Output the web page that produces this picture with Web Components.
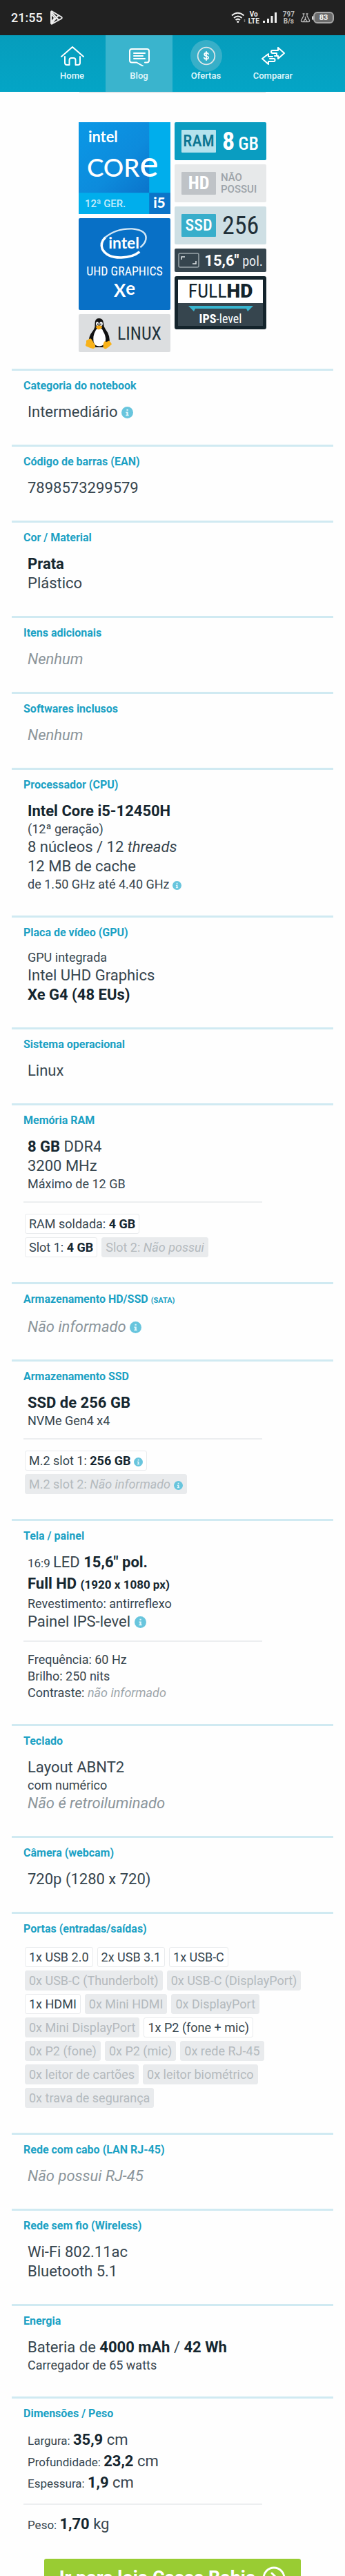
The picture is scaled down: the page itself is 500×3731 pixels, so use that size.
<!DOCTYPE html>
<html lang="pt-BR">
<head>
<meta charset="utf-8">
<meta name="viewport" content="width=device-width, initial-scale=1">
<title>Ficha do notebook</title>
<style>
body{
    margin:0;
    background:#fefefe;
    color:#36454e;
    font-family:Roboto, "Liberation Sans", sans-serif;
}
b{
    font-weight:700;
    color:#15262f;
}
</style>
</head>
<body>
<app-shell>
    <status-bar slot="top"></status-bar>
    <site-nav slot="top">
        <nav-item>
            <svg slot="icon" width="34" height="30" viewBox="0 0 34 30" fill="none" stroke="#fff" stroke-width="2" stroke-linecap="round" stroke-linejoin="round"><path d="M1 16 17 2l16 14M6 16v9q0 3 3 3h3.500V21q0-3 3-3h3q3 0 3 3v7H25q3 0 3-3v-9"/></svg>
            Home
        </nav-item>
        <nav-item active>
            <svg slot="icon" width="34" height="30" viewBox="0 0 34 30" fill="none" stroke="#fff" stroke-width="2" stroke-linecap="round" stroke-linejoin="round"><path d="M13 24.500H6q-3 0-3-3V8q0-3 3-3h22q3 0 3 3v13.500q0 3-3 3h-3M13 24.500l9 5"/><path d="M9 11h16M9 15h13M9 19h16"/></svg>
            Blog
        </nav-item>
        <nav-item halo>
            <svg slot="icon" width="34" height="30" viewBox="0 0 34 30" fill="none" stroke="#fff" stroke-linecap="round"><circle cx="17" cy="15" r="14" stroke="#dfe6e8" stroke-width="2"/><path d="M20.500 12q-1-2-3.500-2-3.200 0-3.200 2.500 0 2 3.200 2.500t3.400 2.500q0 2.700-3.400 2.700-2.900 0-3.700-2.200M17 8v14" stroke-width="2"/></svg>
            Ofertas
        </nav-item>
        <nav-item>
            <svg slot="icon" width="36" height="30" viewBox="0 0 36 30" fill="none" stroke="#fff" stroke-width="2" stroke-linecap="round" stroke-linejoin="round"><path d="M25 3l9 8-9 8v-4h-5M25 3v4h-8q-2 0-2 2t2 2h6v3M11 27l-9-8 9-7v4h6M11 27v-4h8q1.500 0 1.500-2t-1.500-2h-6"/></svg>
            Comparar
        </nav-item>
    </site-nav>

    <product-badges></product-badges>

    <spec-section><span slot="title">Categoria do notebook</span>
        <spec-line>Intermediário <info-dot></info-dot></spec-line>
    </spec-section>
    <spec-section><span slot="title">Código de barras (EAN)</span>
        <spec-line>7898573299579</spec-line>
    </spec-section>
    <spec-section><span slot="title">Cor / Material</span>
        <spec-line><b>Prata</b></spec-line>
        <spec-line>Plástico</spec-line>
    </spec-section>
    <spec-section><span slot="title">Itens adicionais</span>
        <spec-line muted>Nenhum</spec-line>
    </spec-section>
    <spec-section><span slot="title">Softwares inclusos</span>
        <spec-line muted>Nenhum</spec-line>
    </spec-section>
    <spec-section><span slot="title">Processador (CPU)</span>
        <spec-line><b>Intel Core i5-12450H</b></spec-line>
        <spec-line small>(12ª geração)</spec-line>
        <spec-line>8 núcleos / 12 <i>threads</i></spec-line>
        <spec-line>12 MB de cache</spec-line>
        <spec-line small>de 1.50 GHz até 4.40 GHz <info-dot small></info-dot></spec-line>
    </spec-section>
    <spec-section><span slot="title">Placa de vídeo (GPU)</span>
        <spec-line small>GPU integrada</spec-line>
        <spec-line>Intel UHD Graphics</spec-line>
        <spec-line><b>Xe G4 (48 EUs)</b></spec-line>
    </spec-section>
    <spec-section><span slot="title">Sistema operacional</span>
        <spec-line>Linux</spec-line>
    </spec-section>
    <spec-section><span slot="title">Memória RAM</span>
        <spec-line><b>8 GB</b> DDR4</spec-line>
        <spec-line>3200 MHz</spec-line>
        <spec-line small>Máximo de 12 GB</spec-line>
        <spec-rule></spec-rule>
        <chip-list>
            <spec-chip full>RAM soldada: <b>4 GB</b></spec-chip>
            <spec-chip>Slot 1: <b>4 GB</b></spec-chip>
            <spec-chip off>Slot 2: <i>Não possui</i></spec-chip>
        </chip-list>
    </spec-section>
    <spec-section><span slot="title">Armazenamento HD/SSD</span><span slot="note">(SATA)</span>
        <spec-line muted>Não informado <info-dot></info-dot></spec-line>
    </spec-section>
    <spec-section><span slot="title">Armazenamento SSD</span>
        <spec-line><b>SSD de 256 GB</b></spec-line>
        <spec-line small>NVMe Gen4 x4</spec-line>
        <spec-rule></spec-rule>
        <chip-list>
            <spec-chip full>M.2 slot 1: <b>256 GB</b> <info-dot small></info-dot></spec-chip>
            <spec-chip off>M.2 slot 2: <i>Não informado</i> <info-dot small></info-dot></spec-chip>
        </chip-list>
    </spec-section>
    <spec-section><span slot="title">Tela / painel</span>
        <spec-line mixed><spec-text>16:9</spec-text> LED <b>15,6" pol.</b></spec-line>
        <spec-line mixed><b>Full HD <spec-text>(1920 x 1080 px)</spec-text></b></spec-line>
        <spec-line small>Revestimento: antirreflexo</spec-line>
        <spec-line>Painel IPS-level <info-dot></info-dot></spec-line>
        <spec-rule></spec-rule>
        <spec-line small>Frequência: 60 Hz</spec-line>
        <spec-line small>Brilho: 250 nits</spec-line>
        <spec-line small>Contraste: <spec-text muted>não informado</spec-text></spec-line>
    </spec-section>
    <spec-section><span slot="title">Teclado</span>
        <spec-line>Layout ABNT2</spec-line>
        <spec-line small>com numérico</spec-line>
        <spec-line muted>Não é retroiluminado</spec-line>
    </spec-section>
    <spec-section><span slot="title">Câmera (webcam)</span>
        <spec-line>720p (1280 x 720)</spec-line>
    </spec-section>
    <spec-section><span slot="title">Portas (entradas/saídas)</span>
        <chip-list>
            <spec-chip>1x USB 2.0</spec-chip>
            <spec-chip>2x USB 3.1</spec-chip>
            <spec-chip>1x USB-C</spec-chip>
            <spec-chip off>0x USB-C (Thunderbolt)</spec-chip>
            <spec-chip off>0x USB-C (DisplayPort)</spec-chip>
            <spec-chip>1x HDMI</spec-chip>
            <spec-chip off>0x Mini HDMI</spec-chip>
            <spec-chip off>0x DisplayPort</spec-chip>
            <spec-chip off>0x Mini DisplayPort</spec-chip>
            <spec-chip>1x P2 (fone + mic)</spec-chip>
            <spec-chip off>0x P2 (fone)</spec-chip>
            <spec-chip off>0x P2 (mic)</spec-chip>
            <spec-chip off>0x rede RJ-45</spec-chip>
            <spec-chip off>0x leitor de cartões</spec-chip>
            <spec-chip off>0x leitor biométrico</spec-chip>
            <spec-chip off>0x trava de segurança</spec-chip>
        </chip-list>
    </spec-section>
    <spec-section><span slot="title">Rede com cabo (LAN RJ-45)</span>
        <spec-line muted>Não possui RJ-45</spec-line>
    </spec-section>
    <spec-section><span slot="title">Rede sem fio (Wireless)</span>
        <spec-line>Wi-Fi 802.11ac</spec-line>
        <spec-line>Bluetooth 5.1</spec-line>
    </spec-section>
    <spec-section><span slot="title">Energia</span>
        <spec-line>Bateria de <b>4000 mAh</b> / <b>42 Wh</b></spec-line>
        <spec-line small>Carregador de 65 watts</spec-line>
    </spec-section>
    <spec-section><span slot="title">Dimensões / Peso</span>
        <spec-line mixed><spec-text>Largura:</spec-text> <b>35,9</b> cm</spec-line>
        <spec-line mixed><spec-text>Profundidade:</spec-text> <b>23,2</b> cm</spec-line>
        <spec-line mixed><spec-text>Espessura:</spec-text> <b>1,9</b> cm</spec-line>
        <spec-rule></spec-rule>
        <spec-line mixed><spec-text>Peso:</spec-text> <b>1,70</b> kg</spec-line>
    </spec-section>

    <store-link>Ir para loja Casas Bahia</store-link>
</app-shell>

<script>
// every element here is a shadow root cloned from its own template
function define(name, html, setup) {
    const template = document.createElement('template');
    template.innerHTML = html;
    customElements.define(name, class extends HTMLElement {
        constructor() {
            super();
            this.attachShadow({ mode: 'open' });
            this.shadowRoot.appendChild(template.content.cloneNode(true));
        }
        connectedCallback() {
            if (setup) setup(this, this.shadowRoot);
        }
    });
}

// bars stay on top, the sheet scrolls below them
define('app-shell', `
<style>
:host{
    display:flex;
    flex-direction:column;
    height:100vh;
}
main{
    flex:1;
    min-height:0;
    overflow-y:auto;
    scrollbar-width:none;
}
</style>
<header><slot name="top"></slot></header>
<main><slot></slot></main>
`);

define('status-bar', `
<style>
:host{
    display:flex;
    align-items:center;
    justify-content:space-between;
    height:51px;
    padding:0 16px;
    background:#212121;
    color:#f2f2f2;
}
.side{
    display:flex;
    align-items:center;
}
.left{ gap:10px; }
.right{ gap:4px; }
time{
    font-size:18px;
    font-weight:500;
}
.two{
    font-size:10px;
    line-height:10px;
    font-weight:700;
    text-align:center;
}
.dim{ color:#bdbdbd; margin:0 4px; }
.battery{
    display:flex;
    align-items:center;
}
.nub{
    width:2px;
    height:6px;
    margin-left:2px;
    border-radius:2px 0 0 2px;
    background:#ddd;
}
.cell{
    box-sizing:border-box;
    width:30px;
    height:17px;
    border:2px solid #a8a8a8;
    border-radius:6px;
    background:#6b6b6b;
    font-size:11px;
    line-height:13px;
    font-weight:700;
    text-align:center;
}
</style>
<div class="side left">
    <time>21:55</time>
    <svg width="19" height="21" viewBox="0 0 19 21" fill="none" stroke="#eee" stroke-width="2" stroke-linejoin="round"><path d="M2 2.500v16q0 1.500 1.500 1L17 12q1.500-1.300 0-2.500L3.500 1.500Q2 1 2 2.500zM3 3l10 11M3 18.500 13 7M3 6l4 5-4 5"/></svg>
</div>
<div class="side right">
    <svg width="21" height="17" viewBox="0 0 21 17" fill="none" stroke="#eee" stroke-width="2"><path d="M1 5.500q8.500-7.500 17.500 0M4 9q6-5 11.500 0M6.500 12q3.300-2.800 6.500 0"/><circle cx="9.800" cy="14.500" r="1.500" fill="#eee" stroke="none"/><path d="M19.500 11v4" stroke="#777" stroke-width="1.500"/></svg>
    <div class="two">Vo<br>LTE</div>
    <svg width="22" height="17" viewBox="0 0 22 17" fill="#eee"><path d="M1 13h3v3H1zM7 10h3v6H7zM12.500 6h3v10h-3zM18 1h3v15h-3z"/></svg>
    <div class="two dim">797<br>B/s</div>
    <div class="battery">
        <svg width="15" height="14" viewBox="0 0 15 14" fill="none" stroke="#bbb" stroke-width="1.300"><path d="M5 1v3L1.500 10.500q-.5 2 1.500 2h9q2 0 1.500-2L10 4V1M3.500 1h3M8.500 1h3M7.500 5v3l-2.500 4M7.500 8l2.500 4"/></svg>
        <div class="nub"></div>
        <div class="cell">83</div>
    </div>
</div>
`);

define('site-nav', `
<style>
:host{ display:block; }
nav{
    display:flex;
    justify-content:center;
    height:82px;
    background:linear-gradient(#069dbc, #04a5c6);
}
.edge{
    width:54%;
    height:2px;
    margin:0 auto -2px;
    background:linear-gradient(#d3dade, #f6f7f8);
}
</style>
<nav><slot></slot></nav>
<div class="edge"></div>
`);

define('nav-item', `
<style>
:host{
    display:block;
    width:97px;
}
a{
    display:flex;
    flex-direction:column;
    align-items:center;
    gap:6px;
    height:100%;
    box-sizing:border-box;
    padding-top:15px;
    color:#e4f8fc;
    font-size:13px;
    line-height:16px;
    font-weight:500;
    text-decoration:none;
}
.icon{
    display:flex;
    border-radius:50%;
}
:host([active]) a{ background:#3ab4cd; }
:host([halo]) .icon{
    background:#38afc8;
    box-shadow:0 0 0 8px #38afc8;
    width:30px;
    justify-content:center;
}
.label{ position:relative; }
</style>
<a href="#"><span class="icon"><slot name="icon"></slot></span><span class="label"><slot></slot></span></a>
`);

define('product-badges', `
<style>
:host{
    display:flex;
    justify-content:center;
    align-items:flex-start;
    gap:6px;
    padding:44px 16px 24px;
    font-family:"Roboto Condensed", Roboto, sans-serif;
}
.col{
    display:flex;
    flex-direction:column;
    gap:6px;
    width:133px;
}
.col > svg{ display:block; }
.badge{
    display:flex;
    align-items:center;
    box-sizing:border-box;
    height:55px;
    gap:9px;
    padding:0 10px;
    border-radius:2px;
    white-space:nowrap;
}
.tag{
    width:50px;
    height:33px;
    border-radius:1px;
    font-size:24px;
    line-height:33px;
    text-align:center;
}
.linux{ background:#dcdee0; color:#22323b; font-size:26px; gap:8px; }
.ram{ background:#0a9dc1; color:#fff; font-size:26px; font-weight:500; }
.ram .tag{ background:#b4e2ed; color:#0c7591; }
.ram strong{ font-size:36px; }
.ram .value{ display:flex; align-items:baseline; gap:5px; }
.hd{ background:#e7e9ea; color:#9da3a8; font:500 15px/17px Roboto, sans-serif; gap:7px; }
.hd .tag{ background:#bfc3c7; color:#fff; font:700 26px/33px "Roboto Condensed", Roboto, sans-serif; }
.ssd{ background:#cedfe4; color:#1f2f38; font-size:36px; }
.ssd .tag{ background:#38aecb; color:#fff; font-weight:500; }
.size{ background:#36454e; color:#e8ecee; height:34px; padding:0 5px; gap:5px; font-size:20px; justify-content:space-between; }
.size strong{ font-family:Roboto, sans-serif; font-size:22px; color:#fff; }
.full{
    box-sizing:border-box;
    border:5px solid #14242c;
    border-radius:3px;
    background:#36454e;
    color:#fff;
    text-align:center;
}
.full .top{
    background:#fff;
    color:#14242c;
    height:34px;
    font-size:28px;
    line-height:34px;
}
.full .top strong{ font-family:Roboto, sans-serif; font-weight:900; }
.full svg{ display:block; margin:4px auto 0; }
.full .bottom{
    font-size:18px;
    line-height:21px;
}
</style>
<div class="col">
    <svg viewBox="0 0 134 134" width="100%">
        <defs><linearGradient id="core" x1="0" y1="0" x2="1" y2="1"><stop offset="0" stop-color="#0a98e6"/><stop offset=".6" stop-color="#0d8bdc"/><stop offset="1" stop-color="#0b74cb"/></linearGradient></defs>
        <rect width="134" height="134" fill="#00aeec"/>
        <rect width="103" height="103" fill="url(#core)"/>
        <rect x="103" y="103" width="31" height="31" fill="#0b74c8"/>
        <g fill="#fff" font-family="Lato, sans-serif">
            <text x="14" y="29" font-size="22" font-weight="700">intel</text>
            <text x="12" y="80" font-size="37" font-weight="500">COR<tspan font-size="52">e</tspan></text>
            <text x="9" y="124" font-size="15" font-weight="500" font-family="Roboto, sans-serif" fill="#c5ecfb">12ª GER.</text>
            <text x="109" y="125" font-size="21" font-weight="900">i5</text>
        </g>
    </svg>
    <svg viewBox="0 0 134 134" width="100%">
        <rect width="134" height="134" rx="2" fill="#0870c6"/>
        <path d="M39 28Q54 15 78 15.500q23 2 20 16-1.500 6-8 11" fill="none" stroke="#d5e8f6" stroke-width="2.500"/>
        <path d="M39 28Q31 36 34.500 45q7 13 28 12.500Q79 57 89 49" fill="none" stroke="#fff" stroke-width="3.500"/>
        <g fill="#fff" text-anchor="middle">
            <text x="66" y="44" font-size="23" font-weight="700" font-family="Lato, sans-serif">intel</text>
            <text x="67" y="84" font-size="18" font-family="Roboto Condensed, Roboto, sans-serif">UHD GRAPHICS</text>
            <text x="67" y="115" font-size="26" font-weight="700" font-family="Lato, sans-serif">X<tspan dy="-3">e</tspan></text>
        </g>
    </svg>
    <div class="badge linux">
        <svg width="38" height="46" viewBox="0 0 38 46">
            <path d="M19.500 1q6 0 6.500 7 0 5 3 9 7 9 5.500 20L29 43H10L4.500 35q0-8 5.500-15 4-5 3.500-10Q13 1 19.500 1z" fill="#111"/>
            <path d="M20 15q4 0 5.500 5 4 6 3.500 13-1 8-9 8.500-7 0-8.500-7Q10.500 26 14 20q2-5 6-5z" fill="#fff"/>
            <ellipse cx="17" cy="9" rx="2" ry="3" fill="#fff"/><ellipse cx="22.500" cy="9" rx="2.300" ry="3" fill="#fff"/>
            <circle cx="17.500" cy="9.500" r="1" fill="#111"/><circle cx="22" cy="9.500" r="1" fill="#111"/>
            <path d="M14.500 13.500q5-4.500 10 0-4 5-7 3.500z" fill="#f5a914"/>
            <path d="M1 34q0-2 3-2 3-3.500 5 0l5 8q1 4-3 5-5-1-10-3.500Q-1 40 1 37zM28 34q2 2 6-.500 2.500 2 4 5-4 4-8 6.500-5 1-4.500-4 0-5 2.500-7z" fill="#f8b219"/>
        </svg>
        LINUX
    </div>
</div>
<div class="col">
    <div class="badge ram"><span class="tag">RAM</span><span class="value"><strong>8</strong><span>GB</span></span></div>
    <div class="badge hd"><span class="tag">HD</span><span>NÃO<br>POSSUI</span></div>
    <div class="badge ssd"><span class="tag">SSD</span>256</div>
    <div class="badge size">
        <svg width="31" height="22" viewBox="0 0 31 22" fill="none" stroke="#9aa5ab" stroke-width="1.500"><rect x="1" y="1" width="29" height="20" rx="2"/><path d="M5 10V6h5M26 12v4h-5" stroke="#dfe4e6"/></svg>
        <span><strong>15,6″</strong> pol.</span>
    </div>
    <div class="full">
        <div class="top">FULL<strong>HD</strong></div>
        <svg width="94" height="8" viewBox="0 0 94 8"><path d="M0 0h94l-8 8-2-4H10L8 8z" fill="#38b5cf"/></svg>
        <div class="bottom"><strong>IPS</strong>-level</div>
    </div>
</div>
`);

define('spec-section', `
<style>
:host{
    display:block;
    margin:0 17px;
    padding-bottom:33px;
    border-top:3px solid #d0eaf2;
}
h2{
    display:flex;
    align-items:baseline;
    gap:4px;
    margin:0;
    padding:12px 17px 14px;
    color:#1ba1c4;
    font-size:16px;
    line-height:20px;
    font-weight:700;
}
.note{ font-size:11px; }
</style>
<h2><slot name="title"></slot><span class="note"><slot name="note"></slot></span></h2>
<slot></slot>
`, (el, root) => {
    // no gap after the title when there is nothing to put there
    root.querySelector('.note').hidden = !el.querySelector('[slot=note]');
});

define('spec-line', `
<style>
:host{
    display:block;
    padding:0 17px 0 23px;
    font-size:22px;
    line-height:28px;
}
:host([small]){
    font-size:18px;
    line-height:24px;
}
:host([mixed]){ padding-bottom:3px; }
:host([muted]){
    color:#8b959b;
    font-style:italic;
}
</style>
<slot></slot>
`);

define('spec-text', `
<style>
:host{
    display:inline;
    font-size:17px;
    line-height:20px;
}
:host([muted]){
    color:#9ea6aa;
    font-size:18px;
    font-style:italic;
}
</style>
<slot></slot>
`);

define('spec-rule', `
<style>
:host{
    display:block;
    padding:13px 17px 14px;
}
hr{
    width:80%;
    height:2px;
    margin:0;
    border:0;
    background:#eceef0;
}
</style>
<hr>
`);

define('chip-list', `
<style>
:host{
    display:flex;
    flex-wrap:wrap;
    gap:5px 6px;
    padding:2px 17px 3px 19px;
}
</style>
<slot></slot>
`);

define('spec-chip', `
<style>
:host{ display:block; }
/* takes the whole row, so that the next chip starts a new one */
:host([full]){ width:100%; }
span{
    display:inline-block;
    vertical-align:top;
    box-sizing:border-box;
    height:29px;
    padding:0 5px;
    border:1px solid #e9ebed;
    border-radius:3px;
    background:#fff;
    font-size:18px;
    line-height:28px;
}
:host([off]) span{
    background:#e9ebed;
    color:#b4babe;
}
</style>
<span><slot></slot></span>
`);

define('info-dot', `
<style>
:host{
    display:inline-block;
    line-height:0;
    vertical-align:-2px;
}
button{
    display:block;
    padding:0;
    border:0;
    background:none;
    cursor:pointer;
}
svg{
    display:block;
    width:17px;
    height:17px;
}
:host([small]) svg{
    width:13px;
    height:13px;
}
</style>
<button aria-label="Mais informações">
    <svg viewBox="0 0 16 16"><circle cx="8" cy="8" r="8" fill="#68c5dd"/><path d="M7 3.500h2.200v2H7zM6 7h3.200v4H10v1.500H6V11h1V8.500H6z" fill="#e2f5fa"/></svg>
</button>
`);

define('store-link', `
<style>
:host{
    display:block;
    padding:0 64px 30px;
}
a{
    display:flex;
    align-items:center;
    justify-content:center;
    gap:10px;
    height:56px;
    border-radius:3px;
    background:#99cc33;
    color:#fff;
    font-size:27px;
    font-weight:700;
    text-decoration:none;
    white-space:nowrap;
}
</style>
<a href="#"><slot></slot><svg width="34" height="34" viewBox="0 0 34 34" fill="none" stroke="#fff" stroke-width="3"><circle cx="17" cy="17" r="15"/><path d="M14 10l7 7-7 7" stroke-linecap="round"/></svg></a>
`);
</script>
</body>
</html>
